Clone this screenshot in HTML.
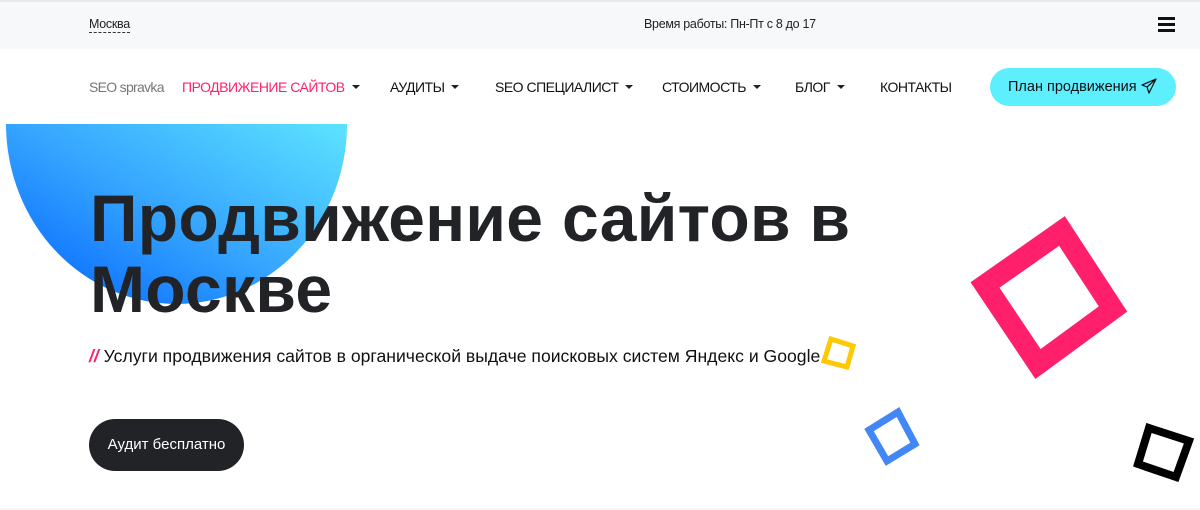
<!DOCTYPE html>
<html><head><meta charset="utf-8"><style>
*{margin:0;padding:0;box-sizing:border-box}
body{width:1200px;height:510px;overflow:hidden;background:#fff;font-family:"Liberation Sans","Noto Sans CJK SC",sans-serif;color:#212121;position:relative}
.top{position:absolute;left:0;top:0;width:1200px;height:49px;background:#f7f8fa;border-top:2px solid #e9eaee}
.a{position:absolute;white-space:nowrap}
.nav{font-size:14px;top:79px;color:#111;letter-spacing:-0.5px}
.car{display:inline-block;width:0;height:0;border-left:4px solid transparent;border-right:4px solid transparent;border-top:4px solid #222;vertical-align:middle;margin-left:7px;margin-top:-2px}
.blob{position:absolute;left:6px;top:124px;width:341px;height:180px;border-radius:0 0 50% 50%/0 0 100% 100%;background:linear-gradient(30deg,#0060ff 0%,#36a6ff 50%,#5ce3ff 100%)}
h1{position:absolute;left:90px;top:183px;font-size:66px;line-height:71px;font-weight:bold;color:#212327;letter-spacing:0.3px}
</style></head><body>
<div class="top"></div>
<div class="a" style="left:89px;top:17px;font-size:12.5px;border-bottom:1px dashed #333;line-height:15px;letter-spacing:-0.3px">Москва</div>
<div class="a" style="left:644px;top:17px;font-size:12.5px;letter-spacing:-0.3px">Время работы: Пн-Пт с 8 до 17</div>
<div class="a" style="left:1158px;top:17px;width:17px;height:15px;border-top:3px solid #111;border-bottom:3px solid #111"><div style="margin-top:3px;height:3px;background:#111"></div></div>

<div class="a nav" style="left:89px;color:#777;letter-spacing:-0.7px">SEO spravka</div>
<div class="a nav" style="left:182px;color:#ff1f6b">ПРОДВИЖЕНИЕ САЙТОВ<span class="car"></span></div>
<div class="a nav" style="left:390px">АУДИТЫ<span class="car"></span></div>
<div class="a nav" style="left:495px">SEO СПЕЦИАЛИСТ<span class="car"></span></div>
<div class="a nav" style="left:662px">СТОИМОСТЬ<span class="car"></span></div>
<div class="a nav" style="left:795px">БЛОГ<span class="car"></span></div>
<div class="a nav" style="left:880px">КОНТАКТЫ</div>
<div class="a" style="left:990px;top:68px;width:186px;height:38px;border-radius:19px;background:#5eefff;font-size:14.5px;line-height:38px;padding-left:18px;color:#111">План продвижения
<svg width="16" height="16" viewBox="0 0 16 16" style="vertical-align:middle;margin-top:-3px"><path d="M15 1L1 7l5 2 2 6 7-14zM6 9l9-8M8 15l-2-6" fill="none" stroke="#111" stroke-width="1.2" stroke-linejoin="round"/></svg></div>

<div class="blob"></div>
<h1>Продвижение сайтов в<br>Москве</h1>
<div class="a" style="left:89px;top:346px;font-size:17.6px;color:#111"><span style="color:#ff1f6b;font-weight:bold;font-style:italic">//</span> Услуги продвижения сайтов в органической выдаче поисковых систем Яндекс и Google</div>
<div class="a" style="left:89px;top:419px;width:155px;height:52px;border-radius:26px;background:#212327;color:#fff;font-size:15px;line-height:52px;text-align:center">Аудит бесплатно</div>

<svg class="a" style="left:0;top:0" width="1200" height="510">
<polygon points="1062,231 1113,309 1038,364 985,285" fill="none" stroke="#ff1f6b" stroke-width="21"/>
<polygon points="831,339 853,346 847,367 824,361" fill="none" stroke="#ffc800" stroke-width="5"/>
<polygon points="898,412 915,444 887,461 869,430" fill="none" stroke="#4287f5" stroke-width="7"/>
<polygon points="1149,428 1189,441 1176,477 1138,464" fill="none" stroke="#000" stroke-width="8"/>
<line x1="0" y1="509" x2="1200" y2="509" stroke="#eee" stroke-width="1"/>
</svg>
</body></html>
